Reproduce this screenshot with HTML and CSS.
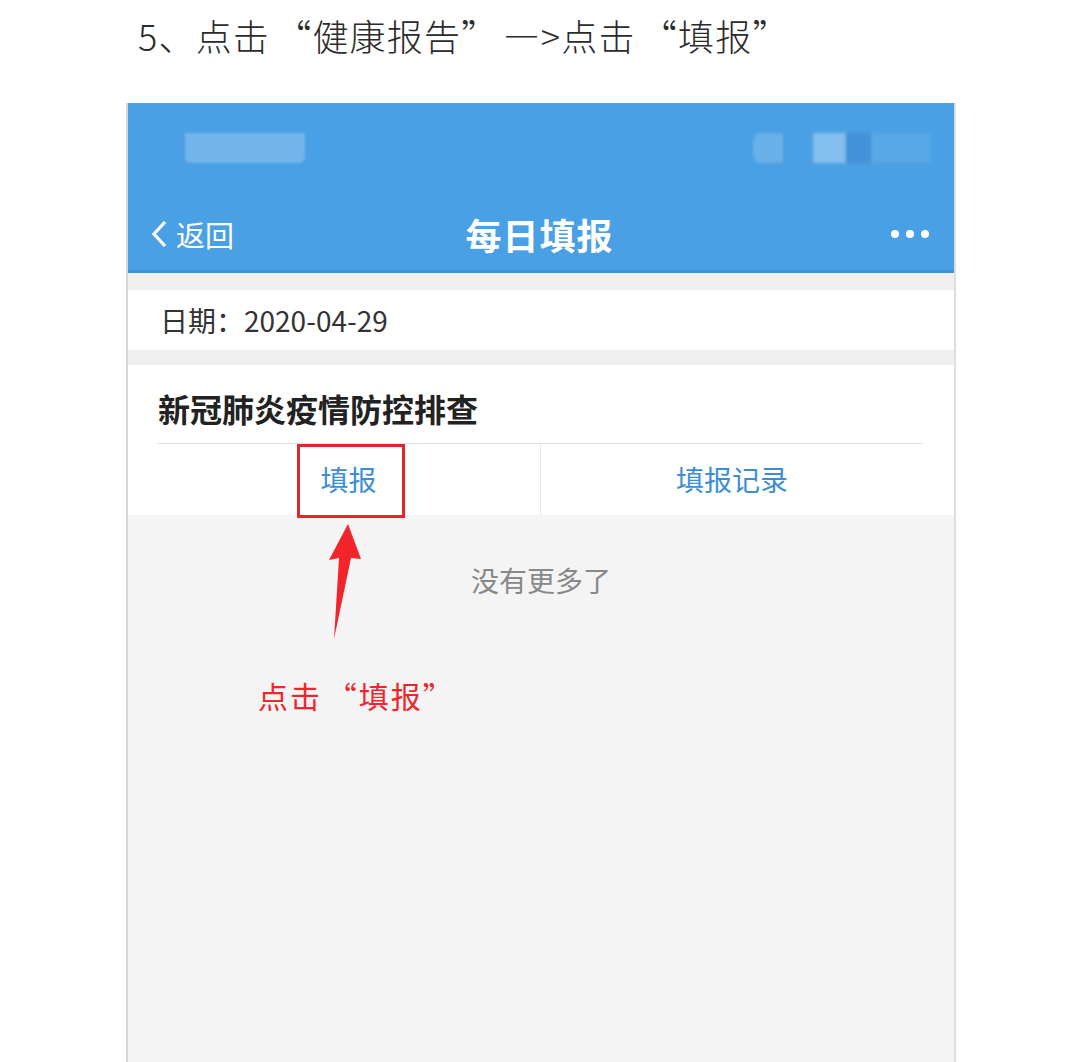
FILE: index.html
```html
<!DOCTYPE html>
<html lang="zh-CN">
<head>
    <meta charset="UTF-8">
    <title>每日填报</title>
    <link rel="stylesheet" href="styles.css">
</head>
<body>

    <h3 class="step">5、点击 “健康报告” —>点击 “填报”</h3>

    <div class="phone">
        <!-- blue app bar with blurred status bar -->
        <div class="appbar">
            <div class="status">
                <div class="blur-left"></div>
                <div class="blur-right">
                    <span class="b1"></span>
                    <span class="b2"></span>
                    <span class="b3"></span>
                    <span class="b4"></span>
                </div>
            </div>
            <div class="nav">
                <div class="back">
                    <svg width="20" height="28" viewBox="0 0 20 28"><path d="M15 2 L4 14 L15 26" fill="none" stroke="#fff" stroke-width="3.2"/></svg>
                    <span>返回</span>
                </div>
                <div class="title">每日填报</div>
                <div class="more"><i></i><i></i><i></i></div>
            </div>
        </div>

        <div class="band"></div>
        <div class="date-row">日期：2020-04-29</div>
        <div class="band small"></div>

        <div class="card">
            <div class="card-title">新冠肺炎疫情防控排查</div>
            <div class="actions">
                <div class="action">填报<div class="highlight"></div></div>
                <div class="action">填报记录</div>
            </div>
        </div>

        <p class="empty">没有更多了</p>

        <!-- red annotation -->
        <svg class="arrow" width="40" height="120" viewBox="0 0 40 120">
            <polygon points="19,0 32,35 22,34 5,115 10,34 0,36" fill="#f2252b"/>
        </svg>
        <div class="note">点击 “填报”</div>
    </div>

</body>
</html>
```

FILE: styles.css
```css
body {
    margin: 0;
    background-color: #fff;
    font-family: "Noto Sans CJK SC", "Noto Sans", sans-serif;
}
.step {
    margin: 0;
    padding: 13px 0 0 138px;
    font-size: 36px;
    line-height: 44px;
    font-weight: 300;
    letter-spacing: 1.2px;
    word-spacing: -4px;
    color: #2b2b2b;
}
.phone {
    position: relative;
    box-sizing: border-box;
    margin: 46px 0 0 126px;
    width: 830px;
    height: 959px;
    overflow: hidden;
    background-color: #f4f4f4;
    border-left: 2px solid #d6d6d6;
    border-right: 2px solid #dedede;
}
.appbar {
    background-color: #4aa0e4;
    border-bottom: 3px solid #3f93db;
}
.status {
    height: 65px;
    padding: 30px 23px 0 57px;
    display: flex;
    justify-content: space-between;
}
.status div,
.status span {
    height: 30px;
    filter: blur(1px);
}
.blur-left {
    width: 120px;
    background-color: rgba(255, 255, 255, 0.22);
    border-radius: 0 0 6px 6px;
}
.blur-right {
    display: flex;
}
.b1 {
    width: 30px;
    margin-right: 30px;
    background-color: rgba(255, 255, 255, 0.18);
    border-radius: 8px 0 0 8px;
}
.b2 {
    width: 33px;
    background-color: rgba(255, 255, 255, 0.32);
}
.b3 {
    width: 25px;
    background-color: rgba(40, 80, 150, 0.18);
}
.b4 {
    width: 60px;
    background-color: rgba(255, 255, 255, 0.08);
}
.nav {
    height: 72px;
    padding: 0 25px 0 22px;
    display: grid;
    grid-template-columns: 1fr auto 1fr;
    align-items: center;
    color: #fff;
}
.back {
    display: flex;
    align-items: center;
    gap: 6px;
    font-size: 29px;
}
.title {
    font-size: 36px;
    font-weight: bold;
    letter-spacing: 1px;
}
.more {
    justify-self: end;
    display: flex;
    gap: 7px;
}
.more i {
    width: 8px;
    height: 8px;
    border-radius: 50%;
    background-color: #fff;
}
.band {
    height: 17px;
    background-color: #efefef;
}
.band.small {
    height: 15px;
}
.date-row {
    height: 60px;
    line-height: 60px;
    padding-left: 32px;
    background-color: #fff;
    font-size: 28px;
    color: #333;
}
.card {
    background-color: #fff;
}
.card-title {
    height: 78px;
    line-height: 86px;
    padding-left: 30px;
    font-size: 32px;
    font-weight: bold;
    color: #222;
}
.actions {
    margin: 0 31px 0 29px;
    border-top: 1px solid #e2e2e2;
    display: grid;
    grid-template-columns: 1fr 1fr;
}
.action {
    position: relative;
    height: 71px;
    line-height: 71px;
    text-align: center;
    font-size: 28px;
    color: #3b8ed4;
}
.action + .action {
    border-left: 1px solid #e6e6e6;
}
.highlight {
    position: absolute;
    left: 140px;
    top: 0;
    width: 102px;
    height: 68px;
    border: 3px solid #e3262b;
}
.empty {
    margin: 45px 0 0;
    text-align: center;
    font-size: 28px;
    line-height: 40px;
    color: #888;
}
.arrow {
    position: absolute;
    left: 201px;
    top: 421px;
}
.note {
    position: absolute;
    left: 130px;
    top: 572px;
    font-size: 30px;
    line-height: 40px;
    letter-spacing: 2px;
    word-spacing: -4px;
    color: #f0262c;
}
```
